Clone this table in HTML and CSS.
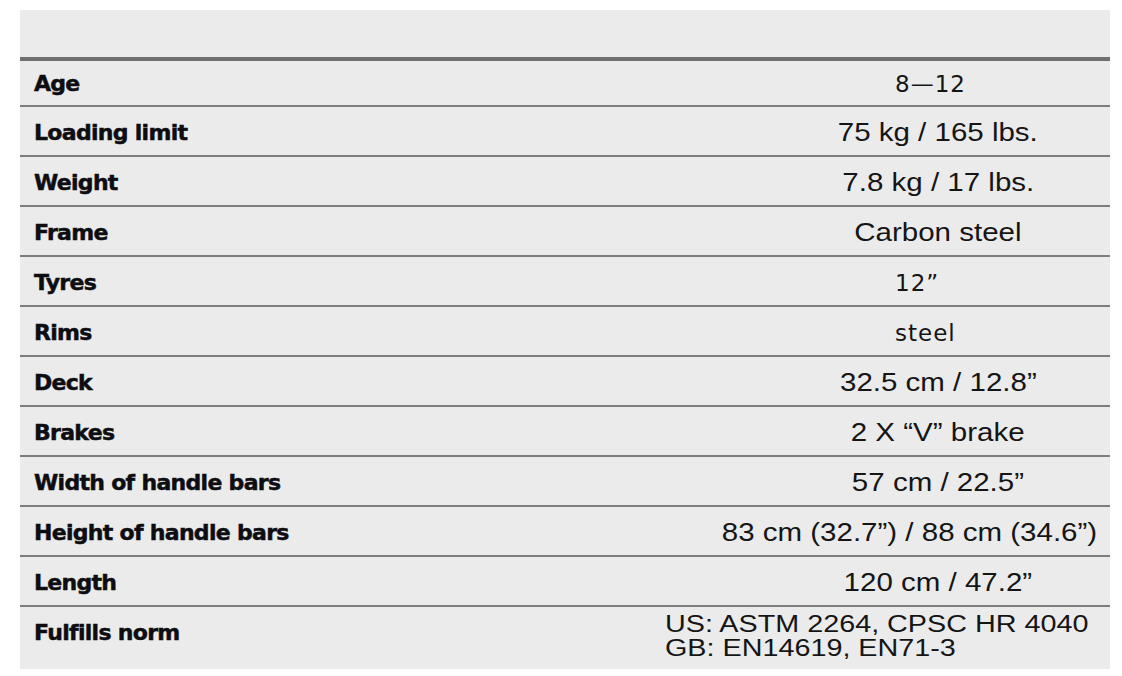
FILE: index.html
```html
<!DOCTYPE html>
<html lang="en">
<head>
<meta charset="utf-8">
<title>Specifications</title>
<link rel="stylesheet" href="styles.css">
</head>
<body>
<div class="spec">
  <div class="spec-head"></div>
  <div class="row first"><div class="label">Age</div><div class="val sq"><span>8—12</span></div></div>
  <div class="row"><div class="label">Loading limit</div><div class="val"><span>75 kg / 165 lbs.</span></div></div>
  <div class="row"><div class="label">Weight</div><div class="val"><span>7.8 kg / 17 lbs.</span></div></div>
  <div class="row"><div class="label">Frame</div><div class="val"><span>Carbon steel</span></div></div>
  <div class="row"><div class="label">Tyres</div><div class="val sq"><span>12”</span></div></div>
  <div class="row"><div class="label">Rims</div><div class="val sq"><span>steel</span></div></div>
  <div class="row"><div class="label">Deck</div><div class="val"><span>32.5 cm / 12.8”</span></div></div>
  <div class="row"><div class="label">Brakes</div><div class="val"><span>2 X “V” brake</span></div></div>
  <div class="row"><div class="label">Width of handle bars</div><div class="val"><span>57 cm / 22.5”</span></div></div>
  <div class="row"><div class="label">Height of handle bars</div><div class="val long"><span>83 cm (32.7”) / 88 cm (34.6”)</span></div></div>
  <div class="row"><div class="label">Length</div><div class="val"><span>120 cm / 47.2”</span></div></div>
  <div class="row last"><div class="label">Fulfills norm</div><div class="val norm"><span>US: ASTM 2264, CPSC HR 4040<br>GB: EN14619, EN71-3</span></div></div>
</div>
</body>
</html>
```

FILE: styles.css
```css
html, body {
  margin: 0;
  padding: 0;
  background: #ffffff;
}

.spec {
  margin: 10px 0 0 20px;
  width: 1090px;
  background: #ebebeb;
}

.spec-head {
  height: 47px;
  border-bottom: 4px solid #6f6f6f;
}

.row {
  box-sizing: border-box;
  display: grid;
  grid-template-columns: 620px 470px;
  align-items: center;
  height: 50px;
  padding-top: 3px;
  border-bottom: 2px solid #7d7d7d;
}

.row.first {
  height: 46px;
  padding-top: 1px;
}

.row.last {
  height: 62px;
  padding-top: 0;
  border-bottom: none;
  align-items: start;
}

.label {
  padding-left: 14px;
  font-family: "DejaVu Sans", sans-serif;
  font-weight: bold;
  font-size: 22px;
  letter-spacing: -0.7px;
  color: #0d0d12;
  -webkit-text-stroke: 0.5px #0d0d12;
}

.row.last .label {
  padding-top: 13px;
}

.val {
  padding-left: 126px;
  text-align: center;
  font-family: "Liberation Sans", Arial, sans-serif;
  font-size: 25px;
  color: #151515;
  white-space: nowrap;
}

.val span {
  display: inline-block;
  transform: scaleX(1.18);
  transform-origin: center;
}

.val.sq {
  padding-left: 255px;
  text-align: left;
  font-family: "DejaVu Sans", sans-serif;
  font-size: 23px;
  letter-spacing: 1px;
}

.val.sq span {
  transform: none;
}

.val.long {
  padding-left: 0;
  padding-right: 13px;
  text-align: right;
}

.val.long span {
  transform-origin: right center;
}

.val.norm {
  padding-left: 25px;
  padding-top: 5px;
  text-align: left;
  font-size: 23px;
  line-height: 24px;
}

.val.norm span {
  transform: scaleX(1.25);
  transform-origin: left top;
}
```
